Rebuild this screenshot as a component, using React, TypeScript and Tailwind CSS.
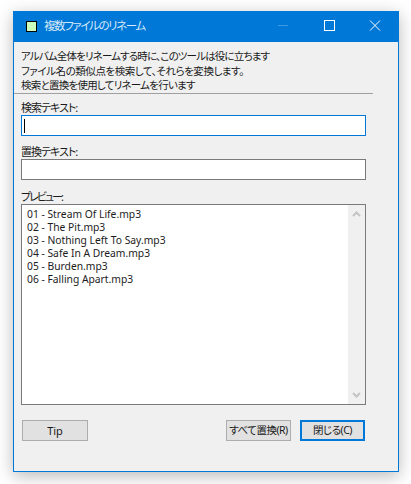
import React from "react";

const files = [
  "01 - Stream Of Life.mp3",
  "02 - The Pit.mp3",
  "03 - Nothing Left To Say.mp3",
  "04 - Safe In A Dream.mp3",
  "05 - Burden.mp3",
  "06 - Falling Apart.mp3",
];

export default function App() {
  return (
    <div className="w-[411px] h-[484px] bg-white pt-[11px] pl-[13px] overflow-hidden">
      <div className="w-[386px] h-[461px] flex flex-col border border-[#0078d7] bg-[#f0f0f0] shadow-[0_4px_16px_rgba(0,0,0,0.28)] font-['Noto_Sans','Noto_Sans_CJK_JP',sans-serif] [font-feature-settings:'palt'] text-[11px] text-[#1a1a1a]">
        <div className="h-[30px] bg-[#0078d7] flex items-center shrink-0 pb-[2px]">
          <div className="ml-[12px] w-[9px] h-[9px] border border-black bg-[#ccffbb] box-content" />
          <span className="ml-[7px] text-[11.5px] text-[#d6e9f8] leading-none tracking-[-1.4px]">複数ファイルのリネーム</span>
          <div className="ml-auto flex items-center">
            <svg width="46" height="28" viewBox="0 0 46 28"><path d="M18 13.5h10" stroke="#3d99e1" strokeWidth="1" /></svg>
            <svg width="46" height="28" viewBox="0 0 46 28"><rect x="18.5" y="8.5" width="10" height="10" fill="none" stroke="#fff" strokeWidth="1" /></svg>
            <svg width="46" height="28" viewBox="0 0 46 28"><path d="M18 8.5l10 10M28 8.5l-10 10" stroke="#fff" strokeWidth="1" /></svg>
          </div>
        </div>

        <div className="pl-[7px] pt-[7px] leading-[14.5px] h-[44px] text-[10.5px]">
          <p className="tracking-[-0.85px]">アルバム全体をリネームする時に、このツールは役に立ちます</p>
          <p className="tracking-[-0.45px]">ファイル名の類似点を検索して、それらを変換します。</p>
          <p className="tracking-[-0.75px]">検索と置換を使用してリネームを行います</p>
        </div>
        <div className="mt-[7px] w-[359px] h-[1px] bg-[#a0a0a0]" />

        <div className="px-[7px] flex flex-col">
          <label className="mt-[7px] leading-[14px] h-[14px] tracking-[-1px]">検索テキスト:</label>
          <div className="w-[345px] h-[21px] border-[1.5px] border-[#0078d7] bg-white flex items-center pl-[2px]">
            <div className="w-[1px] h-[14px] bg-black" />
          </div>

          <label className="mt-[9px] leading-[14px] h-[14px] tracking-[-1px]">置換テキスト:</label>
          <div className="w-[345px] h-[21px] border border-[#7a7a7a] bg-white" />

          <label className="mt-[10px] leading-[14px] h-[14px] tracking-[-2px]">プレビュー:</label>
          <div className="w-[345px] h-[201px] border border-[#7a7a7a] bg-white flex justify-between">
            <ul className="pl-[5px] pt-[3px] leading-[13px] text-[10.3px] text-[#1c1c1c]">
              {files.map((f) => (
                <li key={f}>{f}</li>
              ))}
            </ul>
            <div className="w-[17px] bg-[#f0f0f0] flex flex-col justify-between items-center py-[6px]">
              <svg width="9" height="6" viewBox="0 0 9 6"><path d="M1 5l3.5-3.5L8 5" fill="none" stroke="#c4c4c4" strokeWidth="2" /></svg>
              <svg width="9" height="6" viewBox="0 0 9 6"><path d="M1 1l3.5 3.5L8 1" fill="none" stroke="#c4c4c4" strokeWidth="2" /></svg>
            </div>
          </div>

          <div className="mt-[15px] flex items-center pl-[1px] h-[21px]">
            <button className="w-[66px] h-[21px] bg-[#e1e1e1] border border-[#adadad] leading-none text-[11px]">Tip</button>
            <button className="ml-[138px] w-[65px] h-[21px] bg-[#e1e1e1] border border-[#adadad] leading-none text-[10.5px] whitespace-nowrap tracking-[-0.5px]">すべて置換(R)</button>
            <button className="ml-[9px] w-[65px] h-[21px] bg-[#e1e1e1] border-2 border-[#0078d7] leading-none text-[10.5px] whitespace-nowrap tracking-[-0.5px]">閉じる(C)</button>
          </div>
        </div>
      </div>
    </div>
  );
}
